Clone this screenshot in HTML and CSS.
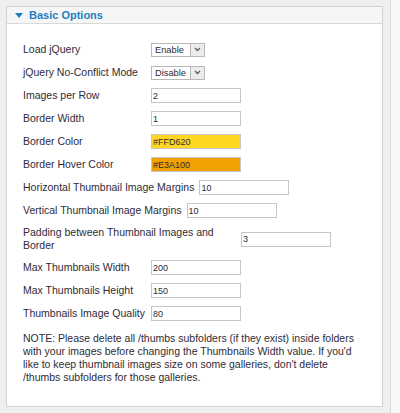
FILE: index.html
```html
<!DOCTYPE html>
<html>
<head>
<meta charset="utf-8">
<link rel="stylesheet" href="styles.css">
</head>
<body>
<div class="frame">
  <div class="panel">
    <div class="panel-head">
      <span class="tri"></span>
      <span class="title">Basic Options</span>
    </div>
    <div class="panel-body">
      <div class="row">
        <label class="key">Load jQuery</label>
        <span class="sel"><span class="sel-val">Enable</span><span class="sel-btn"><svg width="7" height="5" viewBox="0 0 7 5"><polyline points="1,1 3.5,3.5 6,1" fill="none" stroke="#4d5f73" stroke-width="1.3"/></svg></span></span>
      </div>
      <div class="row">
        <label class="key">jQuery No-Conflict Mode</label>
        <span class="sel"><span class="sel-val">Disable</span><span class="sel-btn"><svg width="7" height="5" viewBox="0 0 7 5"><polyline points="1,1 3.5,3.5 6,1" fill="none" stroke="#4d5f73" stroke-width="1.3"/></svg></span></span>
      </div>
      <div class="row">
        <label class="key">Images per Row</label>
        <input class="txt" type="text" value="2">
      </div>
      <div class="row">
        <label class="key">Border Width</label>
        <input class="txt" type="text" value="1">
      </div>
      <div class="row">
        <label class="key">Border Color</label>
        <input class="txt yellow" type="text" value="#FFD620">
      </div>
      <div class="row">
        <label class="key">Border Hover Color</label>
        <input class="txt orange" type="text" value="#E3A100">
      </div>
      <div class="row">
        <label class="key">Horizontal Thumbnail Image Margins</label>
        <input class="txt" type="text" value="10">
      </div>
      <div class="row">
        <label class="key">Vertical Thumbnail Image Margins</label>
        <input class="txt" type="text" value="10">
      </div>
      <div class="row">
        <label class="key">Padding between Thumbnail Images and Border</label>
        <input class="txt" type="text" value="3">
      </div>
      <div class="row">
        <label class="key">Max Thumbnails Width</label>
        <input class="txt" type="text" value="200">
      </div>
      <div class="row">
        <label class="key">Max Thumbnails Height</label>
        <input class="txt" type="text" value="150">
      </div>
      <div class="row">
        <label class="key">Thumbnails Image Quality</label>
        <input class="txt" type="text" value="80">
      </div>
      <p class="note">NOTE: Please delete all /thumbs subfolders (if they exist) inside folders with your images before changing the Thumbnails Width value. If you'd like to keep thumbnail images size on some galleries, don't delete /thumbs subfolders for those galleries.</p>
    </div>
  </div>
</div>
</body>
</html>
```

FILE: styles.css
```css
html, body {
  margin: 0;
  padding: 0;
  background: #f8f8f8;
  height: 100%;
}
body {
  font-family: "Liberation Sans", Arial, sans-serif;
  color: #2e2b38;
}
.frame {
  width: 391px;
  height: 413px;
  background: #efefef;
  border-right: 1px solid #d8d8d8;
  padding: 6px 0 0 6px;
  box-sizing: border-box;
}
.panel {
  width: 377px;
  height: 401px;
  box-sizing: border-box;
  border: 1px solid #d2d2d2;
  background: #fff;
}
.panel-head {
  height: 16px;
  display: flex;
  align-items: center;
  padding-left: 8px;
  background: #f6f6f6;
  border-bottom: 1px solid #d8d8d8;
}
.tri {
  width: 0;
  height: 0;
  border-left: 4px solid transparent;
  border-right: 4px solid transparent;
  border-top: 5px solid #1c80bd;
  margin-right: 6px;
}
.title {
  font-weight: bold;
  font-size: 11px;
  color: #1c80bd;
  line-height: 14px;
}
.panel-body {
  padding: 14px 22px 0 16px;
}
.row {
  display: flex;
  align-items: center;
  padding: 4px 0;
  min-height: 15px;
}
.key {
  font-size: 10.5px;
  line-height: 13px;
  min-width: 123px;
  max-width: 213px;
  margin-right: 5px;
}
.txt {
  width: 90px;
  height: 15px;
  box-sizing: border-box;
  border: 1px solid #c6c6c6;
  padding: 0 1px;
  margin: 0;
  font-family: "Liberation Sans", Arial, sans-serif;
  font-size: 9px;
  color: #2e2b38;
  background: #fff;
  outline: none;
}
.yellow { background: #FFD620; }
.orange { background: #F2A200; }
.sel {
  display: flex;
  width: 54px;
  height: 14px;
  box-sizing: border-box;
  border: 1px solid #b8b8b8;
  background: #fff;
}
.sel-val {
  flex: 1;
  font-size: 9.3px;
  line-height: 12px;
  padding-left: 3px;
  color: #2e2b38;
}
.sel-btn {
  width: 13px;
  border-left: 1px solid #b8b8b8;
  background: #ececec;
  display: flex;
  align-items: center;
  justify-content: center;
}
.note {
  margin: 7px 0 0 0;
  font-size: 10.5px;
  line-height: 13px;
}
```
